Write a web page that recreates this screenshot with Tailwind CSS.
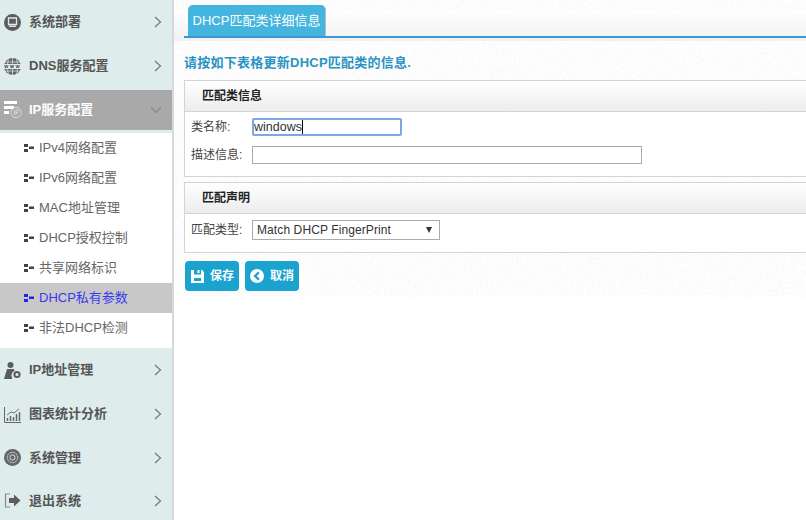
<!DOCTYPE html>
<html lang="zh-CN">
<head>
<meta charset="UTF-8">
<title>DHCP匹配类详细信息</title>
<script src="https://cdn.jsdelivr.net/npm/@tailwindcss/browser@4"></script>
</head>
<body class="bg-white font-['Liberation_Sans','Noto_Sans_CJK_SC',sans-serif] text-[13px] text-[#444]">
<div class="flex h-[520px] w-[806px] overflow-hidden">
  <!-- sidebar -->
  <aside class="w-[174px] shrink-0 overflow-hidden border-r-2 border-[#d6d9d9] bg-[#deecec] font-bold text-[#555]">
    <a class="flex h-[44px] items-center pl-[4px] pr-[10px]">
      <svg class="mr-[8px] h-[17px] w-[17px]" viewBox="0 0 17 17"><circle cx="8.500" cy="8.500" r="8.500" fill="#5c5c5c"/><path d="M4.500 4h8v6.500h-8z" fill="none" stroke="#deecec" stroke-width="1.300"/><rect x="5" y="11.500" width="7" height="1.400" fill="#deecec"/></svg>
      <span class="flex-1">系统部署</span>
      <svg class="h-[12px] w-[8px]" viewBox="0 0 8 12" fill="none" stroke="#777" stroke-width="1.2"><path d="M1 1l5.500 5L1 11"/></svg>
    </a>
    <a class="flex h-[44px] items-center pl-[4px] pr-[10px]">
      <svg class="mr-[8px] h-[17px] w-[17px]" viewBox="0 0 17 17"><circle cx="8.500" cy="8.500" r="8.500" fill="#666"/><path d="M0 4h17M0 13h17M8.500 0v17M4.500 1.500c-1.500 4.500-1.500 9.500 0 14M12.500 1.500c1.500 4.500 1.500 9.500 0 14" stroke="#deecec" stroke-width=".7" fill="none"/><rect y="6" width="17" height="5" fill="#deecec"/><path d="M.5 7l.9 3 .9-3 .9 3 .9-3M6.200 7l.9 3 .9-3 .9 3 .9-3M11.900 7l.9 3 .9-3 .9 3 .9-3" stroke="#555" stroke-width=".8" fill="none"/></svg>
      <span class="flex-1">DNS服务配置</span>
      <svg class="h-[12px] w-[8px]" viewBox="0 0 8 12" fill="none" stroke="#777" stroke-width="1.2"><path d="M1 1l5.500 5L1 11"/></svg>
    </a>
    <a class="mt-[2px] flex h-[40px] items-center bg-[#a9a9a9] pl-[4px] pr-[10px] text-white">
      <svg class="mr-[7px] h-[18px] w-[18px]" viewBox="0 0 18 18"><path d="M0 0h13v3H0zM0 5h10v3H0zM0 10h5v3H0z" fill="#fff"/><circle cx="12" cy="11.500" r="5.200" fill="none" stroke="#e4e4e4" stroke-width=".8"/><path d="M10.300 9v5M12 14V9h1.200a1.300 1.300 0 010 2.800H12" fill="none" stroke="#e4e4e4" stroke-width=".8"/></svg>
      <span class="flex-1">IP服务配置</span>
      <svg class="h-[8px] w-[12px]" viewBox="0 0 12 8" fill="none" stroke="#888" stroke-width="1.2"><path d="M1 1l5 5.500L11 1"/></svg>
    </a>
    <ul class="mt-[3px] bg-white pb-[5px] font-normal text-[#666]">
      <li class="flex h-[30px] items-center pb-px pl-[24px]"><svg class="mr-[5px] h-[8px] w-[10px]" viewBox="0 0 10 8" fill="#444"><path d="M0 0h4v3H0zM0 5h4v3H0zM5 2.500h5v2.500H5z"/></svg>IPv4网络配置</li>
      <li class="flex h-[30px] items-center pb-px pl-[24px]"><svg class="mr-[5px] h-[8px] w-[10px]" viewBox="0 0 10 8" fill="#444"><path d="M0 0h4v3H0zM0 5h4v3H0zM5 2.500h5v2.500H5z"/></svg>IPv6网络配置</li>
      <li class="flex h-[30px] items-center pb-px pl-[24px]"><svg class="mr-[5px] h-[8px] w-[10px]" viewBox="0 0 10 8" fill="#444"><path d="M0 0h4v3H0zM0 5h4v3H0zM5 2.500h5v2.500H5z"/></svg>MAC地址管理</li>
      <li class="flex h-[30px] items-center pb-px pl-[24px]"><svg class="mr-[5px] h-[8px] w-[10px]" viewBox="0 0 10 8" fill="#444"><path d="M0 0h4v3H0zM0 5h4v3H0zM5 2.500h5v2.500H5z"/></svg>DHCP授权控制</li>
      <li class="flex h-[30px] items-center pb-px pl-[24px]"><svg class="mr-[5px] h-[8px] w-[10px]" viewBox="0 0 10 8" fill="#444"><path d="M0 0h4v3H0zM0 5h4v3H0zM5 2.500h5v2.500H5z"/></svg>共享网络标识</li>
      <li class="flex h-[30px] items-center bg-[#c8c8c8] pb-px pl-[24px] text-[#3a3af0]"><svg class="mr-[5px] h-[8px] w-[10px]" viewBox="0 0 10 8" fill="#2222ee"><path d="M0 0h4v3H0zM0 5h4v3H0zM5 2.500h5v2.500H5z"/></svg>DHCP私有参数</li>
      <li class="flex h-[30px] items-center pb-px pl-[24px]"><svg class="mr-[5px] h-[8px] w-[10px]" viewBox="0 0 10 8" fill="#444"><path d="M0 0h4v3H0zM0 5h4v3H0zM5 2.500h5v2.500H5z"/></svg>非法DHCP检测</li>
    </ul>
    <a class="flex h-[44px] items-center pl-[4px] pr-[10px]">
      <svg class="mr-[8px] h-[17px] w-[17px]" viewBox="0 0 17 17" fill="#5c5c5c"><circle cx="6.500" cy="3" r="3"/><path d="M3 7h7l.5 2a4.500 4.500 0 00-2.500 6.500V17H0z"/><circle cx="13" cy="12.500" r="2.600" fill="none" stroke="#5c5c5c" stroke-width="2"/></svg>
      <span class="flex-1 font-bold">IP地址管理</span>
      <svg class="h-[12px] w-[8px]" viewBox="0 0 8 12" fill="none" stroke="#777" stroke-width="1.2"><path d="M1 1l5.500 5L1 11"/></svg>
    </a>
    <a class="flex h-[44px] items-center pl-[4px] pr-[10px]">
      <svg class="mr-[8px] h-[17px] w-[17px]" viewBox="0 0 17 17" fill="none" stroke="#666"><path d="M.5 1v15.500H17" stroke-width="1"/><path d="M3.500 15v-3M6.500 15v-5M9.500 15v-4M12.500 15V8M15.500 15V6" stroke-width="1.500"/><path d="M3 9l4-3 3 1 5-4" stroke-width=".9"/></svg>
      <span class="flex-1">图表统计分析</span>
      <svg class="h-[12px] w-[8px]" viewBox="0 0 8 12" fill="none" stroke="#777" stroke-width="1.2"><path d="M1 1l5.500 5L1 11"/></svg>
    </a>
    <a class="flex h-[43px] items-center pl-[4px] pr-[10px]">
      <svg class="mr-[8px] h-[17px] w-[17px]" viewBox="0 0 17 17"><circle cx="8.500" cy="8.500" r="8.500" fill="#666"/><circle cx="8.500" cy="8.500" r="5.200" fill="none" stroke="#deecec" stroke-width=".9" stroke-dasharray="2.200 .8"/><circle cx="8.500" cy="8.500" r="2.600" fill="none" stroke="#deecec" stroke-width=".9"/></svg>
      <span class="flex-1">系统管理</span>
      <svg class="h-[12px] w-[8px]" viewBox="0 0 8 12" fill="none" stroke="#777" stroke-width="1.2"><path d="M1 1l5.500 5L1 11"/></svg>
    </a>
    <a class="flex h-[43px] items-center pl-[4px] pr-[10px]">
      <svg class="mr-[8px] h-[15px] w-[17px]" viewBox="0 0 17 15"><path d="M6 1H1.500v13H6" fill="none" stroke="#8a8a8a" stroke-width="1.200"/><path d="M5 5h5V1.500L16.500 7.500 10 13.500V10H5z" fill="#5c5c5c"/></svg>
      <span class="flex-1">退出系统</span>
      <svg class="h-[12px] w-[8px]" viewBox="0 0 8 12" fill="none" stroke="#777" stroke-width="1.2"><path d="M1 1l5.500 5L1 11"/></svg>
    </a>
  </aside>

  <!-- main -->
  <main class="relative min-w-0 flex-1">
    <svg class="pointer-events-none absolute left-0 top-0 h-[297px] w-full" aria-hidden="true"><filter id="noise"><feTurbulence type="fractalNoise" baseFrequency="0.4" numOctaves="2"/><feColorMatrix values="0 0 0 0 .6  0 0 0 0 .6  0 0 0 0 .6  0 0 0 .22 -.06"/></filter><rect width="100%" height="100%" filter="url(#noise)"/></svg>
    <div class="relative">
      <div class="ml-[10px] mt-[5px] h-[33px]">
        <div class="absolute inset-x-0 top-[5px] h-[31px] bg-gradient-to-b from-white to-[#f1f1f1]"></div>
        <div class="relative ml-[4px] flex h-[31px] w-[138px] items-center justify-center rounded-t-[5px] border-r border-[#bbb] bg-[#43b5df] text-white">DHCP匹配类详细信息</div>
      </div>
      <div class="relative -mt-[2px] ml-[10px] h-[2px] bg-[#3a96d4]"></div>
      <h2 class="ml-[10px] mt-[15px] h-[19px] text-[13px] font-bold leading-[19px] tracking-[0.25px] text-[#2a93c4]">请按如下表格更新DHCP匹配类的信息.</h2>
      <section class="-mr-[10px] ml-[10px] mt-[8px] h-[97px] border border-[#d4d4d4] bg-white">
        <h3 class="h-[31px] border-b border-[#d4d4d4] bg-gradient-to-b from-white to-[#ececec] pl-[17px] text-[12px] font-bold leading-[31px] text-[#222]">匹配类信息</h3>
        <div class="flex flex-col gap-[10px] pl-[6px] pt-[6px] text-[12px]">
          <div class="flex items-center">
            <label class="w-[61px]">类名称:</label>
            <div class="flex h-[18px] w-[150px] items-center rounded-[2px] border-2 border-[#7ea6e0] text-[12.500px] leading-none text-[#333]">windows<span class="h-[14px] w-px bg-black"></span></div>
          </div>
          <div class="flex items-center">
            <label class="w-[61px]">描述信息:</label>
            <div class="h-[18px] w-[390px] border border-[#aaa] bg-white"></div>
          </div>
        </div>
      </section>
      <section class="-mr-[10px] ml-[10px] mt-[5px] h-[71px] border border-[#d4d4d4] bg-white">
        <h3 class="h-[31px] border-b border-[#d4d4d4] bg-gradient-to-b from-white to-[#ececec] pl-[17px] text-[12px] font-bold leading-[31px] text-[#222]">匹配声明</h3>
        <div class="flex items-center pl-[6px] pt-[6px] text-[12px]">
          <label class="w-[61px]">匹配类型:</label>
          <div class="flex h-[20px] w-[188px] items-center justify-between border border-[#aaa] bg-white pl-[4px] pr-[7px] text-[12px] tracking-[0.1px] text-[#333]">Match DHCP FingerPrint<span class="h-0 w-0 border-x-[3.500px] border-t-[6px] border-x-transparent border-t-[#333]"></span></div>
        </div>
      </section>
      <div class="ml-[11px] mt-[8px] flex gap-[6px]">
        <button class="flex h-[30px] w-[54px] items-center gap-[6px] rounded-[4px] bg-[#1ba3cf] pl-[6px] text-[12px] font-bold text-white">
          <svg class="h-[13px] w-[13px]" viewBox="0 0 13 13"><path fill-rule="evenodd" d="M0 0h3v4.500h7V0h1l2 2v11H0zM3 8v3h7V8z" fill="#fff"/><rect x="6.500" y="0" width="2" height="3" fill="#fff"/></svg>保存</button>
        <button class="flex h-[30px] w-[54px] items-center gap-[6px] rounded-[4px] bg-[#1ba3cf] pl-[5px] text-[12px] font-bold text-white">
          <svg class="h-[14px] w-[14px]" viewBox="0 0 15 15"><circle cx="7.500" cy="7.500" r="7.500" fill="#fff"/><path d="M9.500 3.500L5.500 7.500l4 4" fill="none" stroke="#1ba3cf" stroke-width="2.600"/></svg>取消</button>
      </div>
    </div>
  </main>
</div>
</body>
</html>
